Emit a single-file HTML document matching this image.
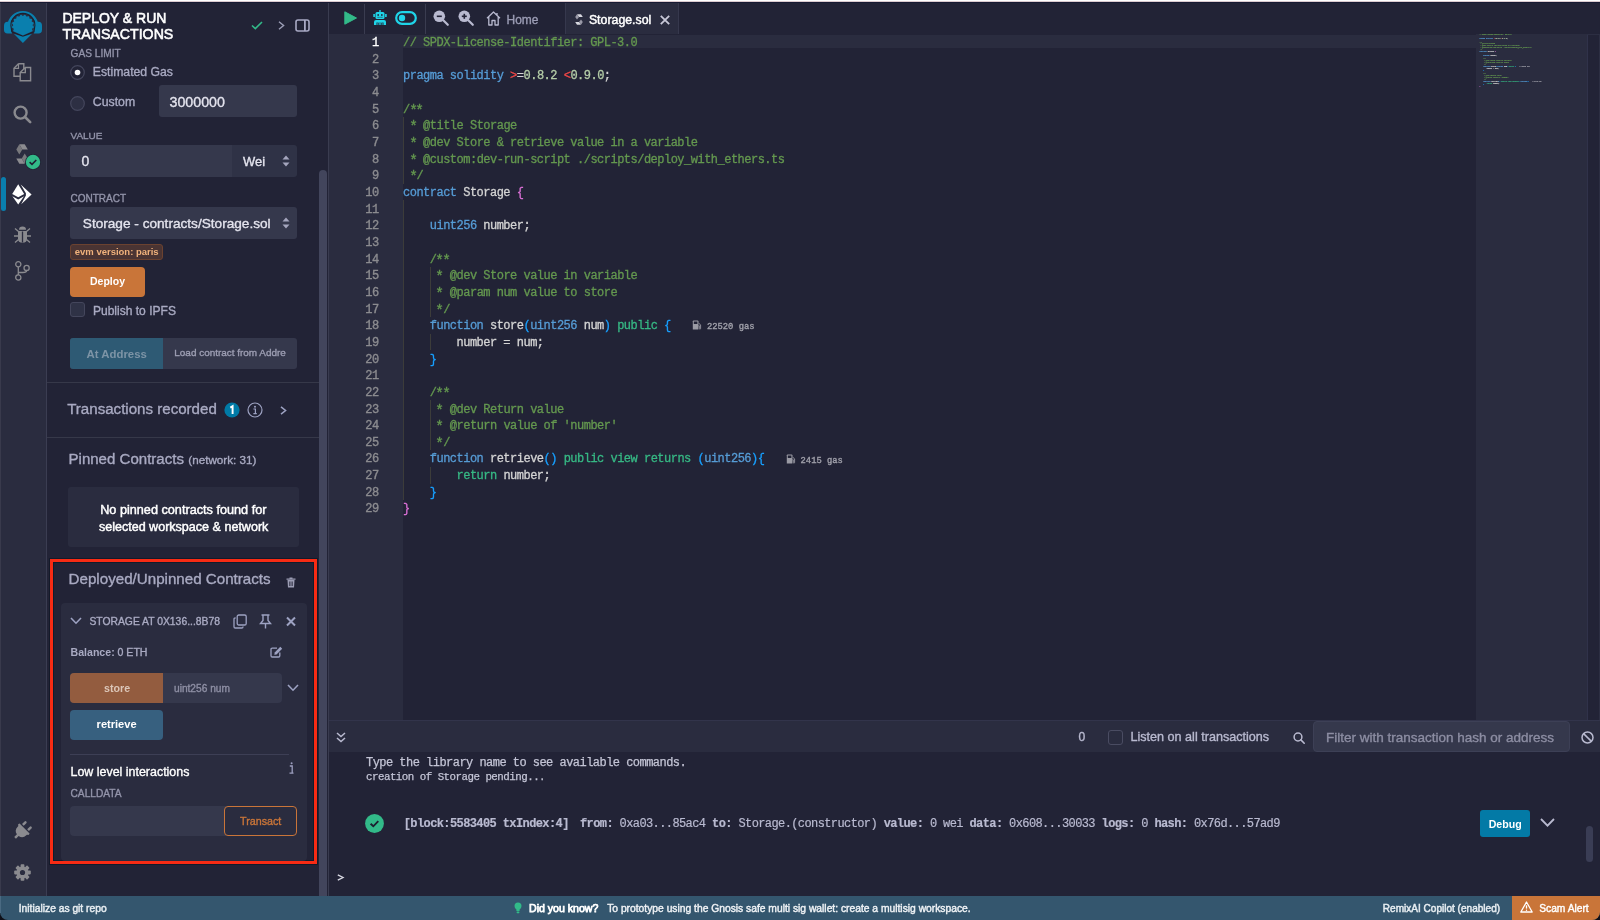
<!DOCTYPE html>
<html><head><meta charset="utf-8">
<style>
*{box-sizing:border-box;margin:0;padding:0}
html,body{width:1600px;height:920px;overflow:hidden;background:#222336}
body{position:relative;font-family:"Liberation Sans",sans-serif;color:#babbcc}
.a{position:absolute}
.t{position:absolute;white-space:nowrap;line-height:1}
#wrap{position:absolute;left:0;top:0;width:1600px;height:920px;will-change:transform}
svg{position:absolute;overflow:visible}
</style></head><body><div id="wrap">

<div class="a" style="left:0px;top:0px;width:1600px;height:1px;background:#ffffff;"></div>
<div class="a" style="left:0px;top:1px;width:1600px;height:1px;background:#dccbcf;"></div>
<div class="a" style="left:0px;top:2px;width:1600px;height:1px;background:#171a33;"></div>
<div class="a" style="left:0px;top:3px;width:46px;height:893px;background:#2a2c3f;"></div>
<div class="a" style="left:0px;top:3px;width:1px;height:893px;background:#393a4c;"></div>
<div class="a" style="left:46px;top:3px;width:1px;height:893px;background:#3b3d52;"></div>
<div class="a" style="left:47px;top:3px;width:281px;height:893px;background:#222336;"></div>
<div class="a" style="left:319px;top:170px;width:8.2px;height:726px;background:#42455c;border-radius:4px 4px 0 0"></div>
<div class="a" style="left:328px;top:3px;width:1px;height:893px;background:#3a3c50;"></div>
<div class="a" style="left:329px;top:3px;width:1271px;height:893px;background:#222336;"></div>
<svg style="left:0px;top:0px" width="46" height="46" viewBox="0 0 46 46">
<path d="M8.8 25.3 A14.15 14.15 0 0 1 37 25.3" fill="none" stroke="#0a7fae" stroke-width="2.7"/>
<path d="M12 21.8 H7.6 Q4 21.8 4 25.6 V29.8 Q4 33.6 7.6 33.6 H12Z" fill="#0a7fae"/>
<path d="M33.8 21.8 H38.4 Q42 21.8 42 25.6 V29.8 Q42 33.6 38.4 33.6 H33.8Z" fill="#0a7fae"/>
<path d="M10.9 25.4 A12 12 0 0 1 34.9 25.4 L34 31.8 L22.9 36.2 L11.8 31.8Z" fill="none" stroke="#1e1e2c" stroke-width="1.1"/>
<path d="M13.29 31.15 L13.20 30.72 L13.33 30.19 L13.56 29.65 L13.74 29.17 L13.73 28.77 L13.49 28.46 L13.05 28.19 L12.54 27.91 L12.11 27.57 L11.91 27.18 L11.99 26.75 L12.31 26.31 L12.72 25.89 L13.07 25.51 L13.21 25.14 L13.10 24.76 L12.79 24.34 L12.42 23.89 L12.15 23.42 L12.11 22.98 L12.35 22.61 L12.80 22.32 L13.34 22.09 L13.81 21.86 L14.08 21.57 L14.12 21.18 L13.99 20.68 L13.81 20.12 L13.73 19.58 L13.86 19.16 L14.22 18.90 L14.75 18.80 L15.33 18.79 L15.85 18.75 L16.21 18.58 L16.39 18.23 L16.45 17.72 L16.50 17.13 L16.62 16.61 L16.90 16.26 L17.33 16.16 L17.86 16.26 L18.41 16.46 L18.90 16.62 L19.29 16.59 L19.60 16.34 L19.85 15.89 L20.10 15.36 L20.42 14.92 L20.80 14.70 L21.24 14.76 L21.69 15.05 L22.13 15.45 L22.53 15.77 L22.90 15.90 L23.27 15.77 L23.67 15.45 L24.11 15.05 L24.56 14.76 L25.00 14.70 L25.38 14.92 L25.70 15.36 L25.95 15.89 L26.20 16.34 L26.51 16.59 L26.90 16.62 L27.39 16.46 L27.94 16.26 L28.47 16.16 L28.90 16.26 L29.18 16.61 L29.30 17.13 L29.35 17.72 L29.41 18.23 L29.59 18.58 L29.95 18.75 L30.47 18.79 L31.05 18.80 L31.58 18.90 L31.94 19.16 L32.07 19.58 L31.99 20.12 L31.81 20.68 L31.68 21.18 L31.72 21.57 L31.99 21.86 L32.46 22.09 L33.00 22.32 L33.45 22.61 L33.69 22.98 L33.65 23.42 L33.38 23.89 L33.01 24.34 L32.70 24.76 L32.59 25.14 L32.73 25.51 L33.08 25.89 L33.49 26.31 L33.81 26.75 L33.89 27.18 L33.69 27.57 L33.26 27.91 L32.75 28.19 L32.31 28.46 L32.07 28.77 L32.06 29.17 L32.24 29.65 L32.47 30.19 L32.60 30.72 L32.51 31.15 L22.9 35.6Z" fill="#0a7fae"/>
<path d="M13.8 33.7 L22.9 36.8 L32.1 33.7 L22.9 43.1Z" fill="#0a7fae"/>
</svg>
<svg style="left:13px;top:63px" width="19" height="19" viewBox="0 0 19 19">
<path d="M5.5 0.8 H10.8 V6 M5.5 0.8 L1 5.3 V13.2 H7" fill="none" stroke="#8a8a8f" stroke-width="1.4"/>
<path d="M5.5 0.8 V5.3 H1" fill="none" stroke="#8a8a8f" stroke-width="1.2"/>
<path d="M12.3 4.5 H17.6 V17.8 H7.2 V9.6 Z M12.3 4.5 V9.6 H7.2" fill="none" stroke="#8a8a8f" stroke-width="1.4"/>
</svg>
<svg style="left:13px;top:104.5px" width="19" height="19" viewBox="0 0 19 19">
<circle cx="7.6" cy="7.6" r="6" fill="none" stroke="#8a8a8f" stroke-width="2.4"/>
<path d="M12 12 L17.2 17.2" stroke="#8a8a8f" stroke-width="2.6" stroke-linecap="round"/>
</svg>
<svg style="left:16px;top:143.5px" width="12" height="20" viewBox="0 0 12 20">
<path d="M3.3 0.3 H8.7 L11.8 5.5 H6.3 Z" fill="#8c8c90"/>
<path d="M3.3 0.3 L0.3 5.5 L3.3 10.5 L6.3 5.5Z" fill="#78787c"/>
<path d="M8.7 19.7 H3.3 L0.3 14.5 H5.7 Z" fill="#8c8c90"/>
<path d="M8.7 19.7 L11.8 14.5 L8.7 9.5 L5.7 14.5Z" fill="#78787c"/>
</svg>
<svg style="left:25.2px;top:154.2px" width="16" height="16" viewBox="0 0 16 16"><circle cx="8" cy="8" r="7.9" fill="#1f2133"/><circle cx="8" cy="8" r="7.2" fill="#32ba89"/><path d="M4.6 8.2 L7 10.3 L11.3 6" fill="none" stroke="#1f2133" stroke-width="1.6"/></svg>
<div class="a" style="left:0.5px;top:177px;width:5px;height:34px;background:#0a7fae;border-radius:2.5px"></div>
<svg style="left:0px;top:180px" width="46" height="30" viewBox="0 0 46 30">
<path d="M18.2 4.2 L24.2 13.9 L18.2 17.2 L12.2 13.9Z" fill="#ffffff"/>
<path d="M12.4 16.3 L18.2 19.6 L24 16.3 L18.2 24.5Z" fill="#ffffff"/>
<path d="M20.7 4.6 L31.6 14.4 L21.2 24.2 L25.9 15.6 L25.9 13.2Z" fill="#ffffff"/>
</svg>
<svg style="left:14px;top:226px" width="17" height="17" viewBox="0 0 17 17">
<path d="M5 3.8 A3.5 3.3 0 0 1 12 3.8Z" fill="#8a8a8f"/>
<path d="M4 5 H13 V12.5 Q13 16.8 8.5 16.8 Q4 16.8 4 12.5Z" fill="#8a8a8f"/>
<path d="M8.5 5.5 V16.5" stroke="#2a2c3f" stroke-width="1.3"/>
<path d="M1 2.5 L4.5 5.5 M16 2.5 L12.5 5.5 M0 10 H4 M17 10 H13 M1 16.5 L4.5 13.5 M16 16.5 L12.5 13.5" stroke="#8a8a8f" stroke-width="1.3"/>
</svg>
<svg style="left:14.5px;top:260.5px" width="15" height="20" viewBox="0 0 15 20">
<circle cx="3.3" cy="3.3" r="2.6" fill="none" stroke="#8a8a8f" stroke-width="1.3"/>
<circle cx="3.3" cy="16.5" r="2.6" fill="none" stroke="#8a8a8f" stroke-width="1.3"/>
<circle cx="11.6" cy="6.9" r="2.6" fill="none" stroke="#8a8a8f" stroke-width="1.3"/>
<path d="M3.3 5.9 V13.9 M3.3 11.5 H8 Q11.6 11.5 11.6 9.5" fill="none" stroke="#8a8a8f" stroke-width="1.3"/>
</svg>
<svg style="left:12px;top:821px" width="20" height="20" viewBox="-262 -262 524 524">
<g transform="rotate(45) translate(-192 -256)" fill="#8a8a8f"><path d="M320,32a32,32,0,0,0-64,0v96h64Zm48,128H16A16,16,0,0,0,0,176v32a16,16,0,0,0,16,16H32v32A160.07,160.07,0,0,0,160,412.8V512h64V412.8A160.07,160.07,0,0,0,352,256V224h16a16,16,0,0,0,16-16V176A16,16,0,0,0,368,160ZM128,32a32,32,0,0,0-64,0v96h64Z"/></g>
</svg>
<svg style="left:13.5px;top:863.5px" width="17" height="17" viewBox="0 0 17 17">
<g fill="#8a8a8f"><circle cx="8.5" cy="8.5" r="6"/>
<rect x="6.6" y="0.2" width="3.8" height="3.5" rx="0.8"/><rect x="6.6" y="13.3" width="3.8" height="3.5" rx="0.8"/>
<rect x="0.2" y="6.6" width="3.5" height="3.8" rx="0.8"/><rect x="13.3" y="6.6" width="3.5" height="3.8" rx="0.8"/>
<rect x="6.6" y="0.2" width="3.8" height="3.5" rx="0.8" transform="rotate(45 8.5 8.5)"/><rect x="6.6" y="13.3" width="3.8" height="3.5" rx="0.8" transform="rotate(45 8.5 8.5)"/>
<rect x="0.2" y="6.6" width="3.5" height="3.8" rx="0.8" transform="rotate(45 8.5 8.5)"/><rect x="13.3" y="6.6" width="3.5" height="3.8" rx="0.8" transform="rotate(45 8.5 8.5)"/>
</g><circle cx="8.5" cy="8.5" r="2.6" fill="#2a2c3f"/>
</svg>
<div class="t" style="left:62.40px;top:11.00px;font-size:14.00px;color:#ffffff;-webkit-text-stroke:0.35px #ffffff;-webkit-text-stroke:0.55px #fff;">DEPLOY &amp; RUN</div>
<div class="t" style="left:62.40px;top:27.00px;font-size:14.17px;color:#ffffff;-webkit-text-stroke:0.35px #ffffff;-webkit-text-stroke:0.55px #fff;">TRANSACTIONS</div>
<svg style="left:251px;top:21px" width="12" height="9" viewBox="0 0 12 9"><path d="M1 4.5 L4.3 7.6 L11 1" fill="none" stroke="#32ba89" stroke-width="1.6"/></svg>
<svg style="left:278px;top:21px" width="7" height="9" viewBox="0 0 7 9"><path d="M1 0.8 L5.6 4.5 L1 8.2" fill="none" stroke="#9d9fb8" stroke-width="1.4"/></svg>
<svg style="left:295px;top:19px" width="15" height="13" viewBox="0 0 15 13"><rect x="1" y="1" width="13" height="11" rx="2" fill="none" stroke="#a8a9c4" stroke-width="1.6"/><rect x="9" y="1" width="1.8" height="11" fill="#a8a9c4"/></svg>
<div class="t" style="left:70.60px;top:49.00px;font-size:10.15px;color:#9394aa;-webkit-text-stroke:0.35px #9394aa;">GAS LIMIT</div>
<svg style="left:70px;top:65px" width="15" height="15" viewBox="0 0 15 15"><circle cx="7.5" cy="7.5" r="6.8" fill="#222336" stroke="#44465c" stroke-width="1.2"/><circle cx="7.5" cy="7.5" r="2.8" fill="#ffffff"/></svg>
<div class="t" style="left:92.80px;top:66.00px;font-size:12.23px;color:#a9aac2;-webkit-text-stroke:0.35px #a9aac2;">Estimated Gas</div>
<svg style="left:70px;top:96px" width="15" height="15" viewBox="0 0 15 15"><circle cx="7.5" cy="7.5" r="6.8" fill="#2d2f43" stroke="#44465c" stroke-width="1.2"/></svg>
<div class="t" style="left:92.80px;top:96.00px;font-size:12.31px;color:#a9aac2;-webkit-text-stroke:0.35px #a9aac2;">Custom</div>
<div class="a" style="left:159px;top:85px;width:138px;height:32px;background:#35384c;border-radius:3px"></div>
<div class="t" style="left:169.50px;top:95.00px;font-size:14.23px;color:#e4e4ee;-webkit-text-stroke:0.35px #e4e4ee;">3000000</div>
<div class="t" style="left:70.50px;top:131.00px;font-size:9.98px;color:#9394aa;-webkit-text-stroke:0.35px #9394aa;">VALUE</div>
<div class="a" style="left:70px;top:145px;width:227px;height:32px;background:#2f3246;border-radius:3px"></div>
<div class="a" style="left:70px;top:145px;width:162px;height:32px;background:#35384c;border-radius:3px 0 0 3px"></div>
<div class="t" style="left:81.60px;top:154.00px;font-size:14.00px;color:#e4e4ee;-webkit-text-stroke:0.35px #e4e4ee;">0</div>
<div class="t" style="left:243.00px;top:156.00px;font-size:12.91px;color:#e4e4ee;-webkit-text-stroke:0.35px #e4e4ee;">Wei</div>
<svg style="left:282px;top:155px" width="8" height="12" viewBox="0 0 8 12"><path d="M4 0.5 L7.5 4.5 L0.5 4.5Z M4 11.5 L7.5 7.5 L0.5 7.5Z" fill="#a4a5bd"/></svg>
<div class="t" style="left:70.50px;top:194.00px;font-size:10.01px;color:#9394aa;-webkit-text-stroke:0.35px #9394aa;">CONTRACT</div>
<div class="a" style="left:70px;top:207px;width:227px;height:32px;background:#35384c;border-radius:3px"></div>
<div class="t" style="left:82.80px;top:217.00px;font-size:13.64px;color:#e4e4ee;-webkit-text-stroke:0.35px #e4e4ee;">Storage - contracts/Storage.sol</div>
<svg style="left:282px;top:217px" width="8" height="12" viewBox="0 0 8 12"><path d="M4 0.5 L7.5 4.5 L0.5 4.5Z M4 11.5 L7.5 7.5 L0.5 7.5Z" fill="#a4a5bd"/></svg>
<div class="a" style="left:70px;top:244px;width:93px;height:16px;background:#4a3433;border:1px solid #6b4230;border-radius:3px"></div>
<div class="t" style="left:74.80px;top:247.00px;font-size:9.49px;color:#f0b27c;font-weight:bold;">evm version: paris</div>
<div class="a" style="left:70px;top:267px;width:75px;height:30px;background:#c97539;border-radius:4px"></div>
<div class="t" style="left:90.00px;top:276.00px;font-size:10.50px;color:#ffffff;font-weight:bold;">Deploy</div>
<div class="a" style="left:70px;top:302px;width:15px;height:15px;background:#2f3246;border:1px solid #44465c;border-radius:3px"></div>
<div class="t" style="left:92.90px;top:305.00px;font-size:12.06px;color:#a9aac2;-webkit-text-stroke:0.35px #a9aac2;">Publish to IPFS</div>
<div class="a" style="left:70px;top:338px;width:227px;height:31px;background:#35384c;border-radius:3px"></div>
<div class="a" style="left:70px;top:338px;width:93px;height:31px;background:#2e5a74;border-radius:3px 0 0 3px"></div>
<div class="t" style="left:86.60px;top:349.00px;font-size:11.38px;color:#7d94a6;font-weight:bold;">At Address</div>
<div class="t" style="left:174.30px;top:348.00px;font-size:9.95px;color:#9d9eb3;-webkit-text-stroke:0.35px #9d9eb3;">Load contract from Addre</div>
<div class="a" style="left:47px;top:382px;width:272px;height:1px;background:#363849;"></div>
<div class="t" style="left:67.20px;top:401.00px;font-size:15.10px;color:#a9aac2;-webkit-text-stroke:0.35px #a9aac2;">Transactions recorded</div>
<svg style="left:224px;top:402px" width="16" height="16" viewBox="0 0 16 16"><circle cx="8" cy="8" r="7.6" fill="#007aa6"/><path d="M6.3 5.6 L8.6 4.2 L8.6 12" fill="none" stroke="#fff" stroke-width="1.9"/></svg>
<svg style="left:246.5px;top:402px" width="16" height="16" viewBox="0 0 16 16"><circle cx="8" cy="8" r="7" fill="none" stroke="#9da2c2" stroke-width="1.2"/><circle cx="8" cy="4.8" r="1" fill="#9da2c2"/><path d="M6.4 7 H8.4 V11.6 M6.4 11.6 H9.8" fill="none" stroke="#9da2c2" stroke-width="1.2"/></svg>
<svg style="left:279.5px;top:406px" width="7" height="9" viewBox="0 0 7 9"><path d="M1 0.8 L5.6 4.5 L1 8.2" fill="none" stroke="#9da2c2" stroke-width="1.5"/></svg>
<div class="a" style="left:47px;top:437px;width:272px;height:1px;background:#363849;"></div>
<div class="t" style="left:68.50px;top:451.00px;font-size:15.06px;color:#a9aac2;-webkit-text-stroke:0.35px #a9aac2;">Pinned Contracts</div>
<div class="t" style="left:188.30px;top:454.00px;font-size:11.67px;color:#a9aac2;-webkit-text-stroke:0.35px #a9aac2;">(network: 31)</div>
<div class="a" style="left:68px;top:487px;width:231px;height:60px;background:#2a2c3f;border-radius:3px"></div>
<div class="t" style="left:100.20px;top:504.00px;font-size:12.68px;color:#ffffff;-webkit-text-stroke:0.35px #ffffff;-webkit-text-stroke:0.45px #fff;">No pinned contracts found for</div>
<div class="t" style="left:98.90px;top:521.00px;font-size:12.56px;color:#ffffff;-webkit-text-stroke:0.35px #ffffff;-webkit-text-stroke:0.45px #fff;">selected workspace &amp; network</div>
<div class="a" style="left:50px;top:559px;width:267px;height:305px;background:transparent;border:3px solid #f72b14;box-shadow:0 0 0 1px rgba(10,20,35,0.6),inset 0 0 0 1px rgba(10,25,40,0.7)"></div>
<div class="t" style="left:68.60px;top:571.00px;font-size:15.15px;color:#a9aac2;-webkit-text-stroke:0.35px #a9aac2;">Deployed/Unpinned Contracts</div>
<svg style="left:285.5px;top:577px" width="10" height="11" viewBox="0 0 10 11"><path d="M3.5 1 H6.5 M0.5 2.2 H9.5" stroke="#9c9db4" stroke-width="1.2" fill="none"/><path d="M1.5 3 H8.5 L8 10.5 H2Z" fill="#9c9db4"/><path d="M3.6 4.5 V9 M5 4.5 V9 M6.4 4.5 V9" stroke="#222336" stroke-width="0.7"/></svg>
<div class="a" style="left:61px;top:603px;width:246px;height:258px;background:#2a2c3f;border-radius:4px"></div>
<svg style="left:69.5px;top:617px" width="12" height="8" viewBox="0 0 12 8"><path d="M1 1 L6 6.2 L11 1" fill="none" stroke="#9da2c2" stroke-width="1.6"/></svg>
<div class="t" style="left:89.40px;top:617.00px;font-size:10.35px;color:#a9aac2;-webkit-text-stroke:0.35px #a9aac2;">STORAGE AT 0X136...8B78</div>
<svg style="left:232.5px;top:613.5px" width="14" height="15" viewBox="0 0 14 15"><rect x="4.2" y="1" width="9" height="10" rx="1.6" fill="none" stroke="#9da2c2" stroke-width="1.3"/><path d="M2.6 4 H2.2 Q1 4 1 5.2 V12.8 Q1 14 2.2 14 H8.8 Q10 14 10 12.8 V12.5" fill="none" stroke="#9da2c2" stroke-width="1.3"/></svg>
<svg style="left:259px;top:614px" width="13" height="15" viewBox="0 0 13 15"><path d="M2.5 1 H10.5 M4 1.2 V6.5 L1.5 9.5 H11.5 L9 6.5 V1.2 M6.5 9.5 V14.5" fill="none" stroke="#9da2c2" stroke-width="1.4"/></svg>
<svg style="left:285.5px;top:617px" width="10" height="9" viewBox="0 0 10 9"><path d="M1 0.5 L9 8.5 M9 0.5 L1 8.5" fill="none" stroke="#9da2c2" stroke-width="2"/></svg>
<div class="t" style="left:70.50px;top:647.00px;font-size:10.60px;color:#a9aac2;font-weight:bold;">Balance:</div>
<div class="t" style="left:117.50px;top:647.00px;font-size:10.59px;color:#a9aac2;-webkit-text-stroke:0.35px #a9aac2;">0 ETH</div>
<svg style="left:270px;top:646px" width="13" height="12" viewBox="0 0 13 12"><path d="M7 2.2 H2.2 Q1 2.2 1 3.4 V9.8 Q1 11 2.2 11 H8.6 Q9.8 11 9.8 9.8 V6.5" fill="none" stroke="#9da2c2" stroke-width="1.3"/><path d="M10.3 0.8 L12.2 2.7 L6.5 8.4 L4.3 8.8 L4.7 6.5Z" fill="#9da2c2"/></svg>
<div class="a" style="left:70px;top:673px;width:212px;height:30px;background:#35384c;border-radius:4px"></div>
<div class="a" style="left:70px;top:673px;width:93px;height:30px;background:#935c3f;border-radius:4px 0 0 4px"></div>
<div class="t" style="left:104.00px;top:683.00px;font-size:10.67px;color:#dcc6b8;font-weight:bold;">store</div>
<div class="t" style="left:174.00px;top:684.00px;font-size:10.17px;color:#8e8fa4;-webkit-text-stroke:0.35px #8e8fa4;">uint256 num</div>
<svg style="left:286.5px;top:683.5px" width="12" height="8" viewBox="0 0 12 8"><path d="M1 1 L6 6.2 L11 1" fill="none" stroke="#9da2c2" stroke-width="1.6"/></svg>
<div class="a" style="left:70px;top:710px;width:93px;height:30px;background:#37607f;border-radius:4px"></div>
<div class="t" style="left:96.60px;top:719.00px;font-size:11.07px;color:#ffffff;font-weight:bold;">retrieve</div>
<div class="a" style="left:70px;top:754px;width:219px;height:1px;background:#3d3f55;"></div>
<div class="t" style="left:70.50px;top:766.00px;font-size:12.44px;color:#ffffff;-webkit-text-stroke:0.35px #ffffff;">Low level interactions</div>
<svg style="left:289px;top:762px" width="5" height="12" viewBox="0 0 5 12"><circle cx="2.6" cy="1.2" r="1" fill="#9d9fc0"/><path d="M0.8 4 H3.2 V11.2 M0.5 11.2 H4.5" fill="none" stroke="#9d9fc0" stroke-width="1.3"/></svg>
<div class="t" style="left:70.50px;top:789.00px;font-size:10.18px;color:#9394aa;-webkit-text-stroke:0.35px #9394aa;">CALLDATA</div>
<div class="a" style="left:70px;top:806px;width:160px;height:30px;background:#35384c;border-radius:4px 0 0 4px"></div>
<div class="a" style="left:223.5px;top:806px;width:73.5px;height:30px;background:#2a2c3f;border:1px solid #c97539;border-radius:4px"></div>
<div class="t" style="left:240.00px;top:816.00px;font-size:10.72px;color:#c97539;-webkit-text-stroke:0.35px #c97539;">Transact</div>
<div class="a" style="left:364px;top:4px;width:1px;height:30px;background:#3a3c50;"></div>
<div class="a" style="left:424.5px;top:4px;width:1px;height:30px;background:#3a3c50;"></div>
<svg style="left:343.5px;top:11px" width="13" height="14" viewBox="0 0 13 14"><path d="M0.8 0.8 L12.5 7 L0.8 13.2Z" fill="#32ba89" stroke="#32ba89" stroke-width="1" stroke-linejoin="round"/></svg>
<svg style="left:372.5px;top:10px" width="14" height="15" viewBox="0 0 14 15">
<rect x="6.3" y="0" width="1.4" height="2.2" fill="#1fd4e8"/>
<rect x="2.5" y="2" width="9" height="7" rx="1.5" fill="#1fd4e8"/>
<rect x="0.3" y="4" width="1.6" height="3" fill="#1fd4e8"/><rect x="12.1" y="4" width="1.6" height="3" fill="#1fd4e8"/>
<rect x="4.4" y="4.2" width="1.6" height="1.6" fill="#222336"/><rect x="8" y="4.2" width="1.6" height="1.6" fill="#222336"/>
<rect x="4.6" y="6.8" width="1" height="0.9" fill="#222336"/><rect x="6.5" y="6.8" width="1" height="0.9" fill="#222336"/><rect x="8.4" y="6.8" width="1" height="0.9" fill="#222336"/>
<path d="M1 15 V12 Q1 10 3 10 H11 Q13 10 13 12 V15 H10.5 V12.5 H3.5 V15Z" fill="#1fd4e8"/>
<rect x="4.5" y="12.5" width="5" height="2.5" fill="#1fd4e8"/>
<rect x="5.3" y="13" width="0.7" height="2" fill="#222336"/><rect x="6.65" y="13" width="0.7" height="2" fill="#222336"/><rect x="8" y="13" width="0.7" height="2" fill="#222336"/>
</svg>
<svg style="left:395px;top:11px" width="22" height="14" viewBox="0 0 22 14">
<rect x="1.2" y="1.2" width="19.6" height="11.6" rx="5.8" fill="none" stroke="#1fd4e8" stroke-width="2.2"/>
<circle cx="7" cy="7" r="3.2" fill="#1fd4e8"/>
</svg>
<svg style="left:433px;top:9.5px" width="16" height="16" viewBox="0 0 16 16">
<circle cx="6.3" cy="6.3" r="5.8" fill="#b9bad0"/>
<path d="M3.8 6.3 H8.8" stroke="#222336" stroke-width="1.6"/>
<path d="M10.3 10.3 L14.8 14.8" stroke="#b9bad0" stroke-width="2.2" stroke-linecap="round"/>
</svg>
<svg style="left:457.5px;top:9.5px" width="16" height="16" viewBox="0 0 16 16">
<circle cx="6.3" cy="6.3" r="5.8" fill="#b9bad0"/>
<path d="M3.8 6.3 H8.8" stroke="#222336" stroke-width="1.6"/><path d="M6.3 3.8 V8.8" stroke="#222336" stroke-width="1.6"/>
<path d="M10.3 10.3 L14.8 14.8" stroke="#b9bad0" stroke-width="2.2" stroke-linecap="round"/>
</svg>
<svg style="left:485.5px;top:10.5px" width="15" height="15" viewBox="0 0 15 15">
<path d="M1 7.2 L7.5 1 L14 7.2 M2.8 5.8 V14 H6 V9.5 H9 V14 H12.2 V5.8 M11 2 V4.2" fill="none" stroke="#b9bad0" stroke-width="1.3" stroke-linejoin="round"/>
</svg>
<div class="t" style="left:506.60px;top:15.00px;font-size:11.96px;color:#9c9db5;-webkit-text-stroke:0.35px #9c9db5;">Home</div>
<div class="a" style="left:565px;top:3px;width:114px;height:31px;background:#2a2c3f;border-left:1px solid #36384d;border-right:1px solid #36384d"></div>
<svg style="left:575px;top:14px" width="8" height="11" viewBox="0 0 8 11">
<path d="M2 0.3 H6 L7.8 3 H4Z" fill="#d8d8e0"/><path d="M2 0.3 L0.2 3 L2 5.6 L4 3Z" fill="#9a9aa8"/>
<path d="M6 10.7 H2 L0.2 8 H4Z" fill="#d8d8e0"/><path d="M6 10.7 L7.8 8 L6 5.4 L4 8Z" fill="#9a9aa8"/>
</svg>
<div class="t" style="left:588.90px;top:14.00px;font-size:12.35px;color:#ffffff;-webkit-text-stroke:0.35px #ffffff;-webkit-text-stroke:0.45px #fff;">Storage.sol</div>
<svg style="left:660px;top:14.5px" width="10" height="10" viewBox="0 0 10 10"><path d="M0.8 0.8 L9.2 9.2 M9.2 0.8 L0.8 9.2" stroke="#c8c8d8" stroke-width="1.8"/></svg>
<div class="a" style="left:329px;top:34px;width:74px;height:686px;background:#2a2c3f;"></div>
<div class="a" style="left:1476px;top:34px;width:112px;height:686px;background:#2a2c3f;"></div>
<div class="a" style="left:1588px;top:34px;width:12px;height:686px;background:#222336;"></div>
<div class="a" style="left:1587px;top:34px;width:1px;height:686px;background:#30324a;"></div>
<div class="a" style="left:1587px;top:34px;width:13px;height:1px;background:#2c2e42;"></div>
<div class="a" style="left:1599px;top:34px;width:1px;height:686px;background:#2c2e42;"></div>
<div class="a" style="left:403px;top:35px;width:1073px;height:13px;background:#2a2c3f;"></div>
<div class="a" style="left:403px;top:117.0px;width:1px;height:16.66px;background:#3c3c3a;"></div>
<div class="a" style="left:403px;top:133.66px;width:1px;height:16.66px;background:#3c3c3a;"></div>
<div class="a" style="left:403px;top:150.32px;width:1px;height:16.66px;background:#3c3c3a;"></div>
<div class="a" style="left:403px;top:166.98px;width:1px;height:16.66px;background:#3c3c3a;"></div>
<div class="a" style="left:403px;top:200.3px;width:1px;height:16.66px;background:#3c3c3a;"></div>
<div class="a" style="left:403px;top:216.96px;width:1px;height:16.66px;background:#3c3c3a;"></div>
<div class="a" style="left:403px;top:233.62px;width:1px;height:16.66px;background:#3c3c3a;"></div>
<div class="a" style="left:403px;top:250.28px;width:1px;height:16.66px;background:#3c3c3a;"></div>
<div class="a" style="left:403px;top:266.94px;width:1px;height:16.66px;background:#3c3c3a;"></div>
<div class="a" style="left:403px;top:283.6px;width:1px;height:16.66px;background:#3c3c3a;"></div>
<div class="a" style="left:403px;top:300.26px;width:1px;height:16.66px;background:#3c3c3a;"></div>
<div class="a" style="left:403px;top:316.92px;width:1px;height:16.66px;background:#3c3c3a;"></div>
<div class="a" style="left:403px;top:333.58px;width:1px;height:16.66px;background:#3c3c3a;"></div>
<div class="a" style="left:403px;top:350.24px;width:1px;height:16.66px;background:#3c3c3a;"></div>
<div class="a" style="left:403px;top:366.9px;width:1px;height:16.66px;background:#3c3c3a;"></div>
<div class="a" style="left:403px;top:383.56px;width:1px;height:16.66px;background:#3c3c3a;"></div>
<div class="a" style="left:403px;top:400.22px;width:1px;height:16.66px;background:#3c3c3a;"></div>
<div class="a" style="left:403px;top:416.88px;width:1px;height:16.66px;background:#3c3c3a;"></div>
<div class="a" style="left:403px;top:433.54px;width:1px;height:16.66px;background:#3c3c3a;"></div>
<div class="a" style="left:403px;top:450.2px;width:1px;height:16.66px;background:#3c3c3a;"></div>
<div class="a" style="left:403px;top:466.86px;width:1px;height:16.66px;background:#3c3c3a;"></div>
<div class="a" style="left:403px;top:483.52px;width:1px;height:16.66px;background:#3c3c3a;"></div>
<div class="a" style="left:429.7px;top:266.94px;width:1px;height:16.66px;background:#3c3c3a;"></div>
<div class="a" style="left:429.7px;top:283.6px;width:1px;height:16.66px;background:#3c3c3a;"></div>
<div class="a" style="left:429.7px;top:300.26px;width:1px;height:16.66px;background:#3c3c3a;"></div>
<div class="a" style="left:429.7px;top:333.58px;width:1px;height:16.66px;background:#3c3c3a;"></div>
<div class="a" style="left:429.7px;top:400.22px;width:1px;height:16.66px;background:#3c3c3a;"></div>
<div class="a" style="left:429.7px;top:416.88px;width:1px;height:16.66px;background:#3c3c3a;"></div>
<div class="a" style="left:429.7px;top:433.54px;width:1px;height:16.66px;background:#3c3c3a;"></div>
<div class="a" style="left:429.7px;top:466.86px;width:1px;height:16.66px;background:#3c3c3a;"></div>
<div class="t" style="left:372.03px;top:37.00px;font-size:12.00px;color:#ffffff;font-family:'Liberation Mono',monospace;-webkit-text-stroke:0.35px #ffffff;letter-spacing:-0.51px;">1</div>
<div class="t" style="left:403px;top:37.00px;font-size:12.0px;font-family:&quot;Liberation Mono&quot;,monospace;letter-spacing:-0.510px;white-space:pre;-webkit-text-stroke-width:0.3px"><span style="color:#64984f">// SPDX-License-Identifier: GPL-3.0</span></div>
<div class="t" style="left:372.03px;top:54.00px;font-size:12.00px;color:#8c8c90;font-family:'Liberation Mono',monospace;-webkit-text-stroke:0.35px #8c8c90;letter-spacing:-0.51px;">2</div>
<div class="t" style="left:372.03px;top:70.00px;font-size:12.00px;color:#8c8c90;font-family:'Liberation Mono',monospace;-webkit-text-stroke:0.35px #8c8c90;letter-spacing:-0.51px;">3</div>
<div class="t" style="left:403px;top:70.00px;font-size:12.0px;font-family:&quot;Liberation Mono&quot;,monospace;letter-spacing:-0.510px;white-space:pre;-webkit-text-stroke-width:0.3px"><span style="color:#569cd6">pragma</span><span style="color:#d4d4d4"> </span><span style="color:#569cd6">solidity</span><span style="color:#d4d4d4"> </span><span style="color:#f44747">&gt;</span><span style="color:#d4d4d4">=</span><span style="color:#b5cea8">0.8.2</span><span style="color:#d4d4d4"> </span><span style="color:#f44747">&lt;</span><span style="color:#b5cea8">0.9.0</span><span style="color:#d4d4d4">;</span></div>
<div class="t" style="left:372.03px;top:87.00px;font-size:12.00px;color:#8c8c90;font-family:'Liberation Mono',monospace;-webkit-text-stroke:0.35px #8c8c90;letter-spacing:-0.51px;">4</div>
<div class="t" style="left:372.03px;top:104.00px;font-size:12.00px;color:#8c8c90;font-family:'Liberation Mono',monospace;-webkit-text-stroke:0.35px #8c8c90;letter-spacing:-0.51px;">5</div>
<div class="t" style="left:403px;top:104.00px;font-size:12.0px;font-family:&quot;Liberation Mono&quot;,monospace;letter-spacing:-0.510px;white-space:pre;-webkit-text-stroke-width:0.3px"><span style="color:#64984f">/<span style="display:inline-block;transform:translateY(1.6px) scale(1.2)">*</span><span style="display:inline-block;transform:translateY(1.6px) scale(1.2)">*</span></span></div>
<div class="t" style="left:372.03px;top:120.00px;font-size:12.00px;color:#8c8c90;font-family:'Liberation Mono',monospace;-webkit-text-stroke:0.35px #8c8c90;letter-spacing:-0.51px;">6</div>
<div class="t" style="left:403px;top:120.00px;font-size:12.0px;font-family:&quot;Liberation Mono&quot;,monospace;letter-spacing:-0.510px;white-space:pre;-webkit-text-stroke-width:0.3px"><span style="color:#64984f"> <span style="display:inline-block;transform:translateY(1.6px) scale(1.2)">*</span> @title Storage</span></div>
<div class="t" style="left:372.03px;top:137.00px;font-size:12.00px;color:#8c8c90;font-family:'Liberation Mono',monospace;-webkit-text-stroke:0.35px #8c8c90;letter-spacing:-0.51px;">7</div>
<div class="t" style="left:403px;top:137.00px;font-size:12.0px;font-family:&quot;Liberation Mono&quot;,monospace;letter-spacing:-0.510px;white-space:pre;-webkit-text-stroke-width:0.3px"><span style="color:#64984f"> <span style="display:inline-block;transform:translateY(1.6px) scale(1.2)">*</span> @dev Store &amp; retrieve value in a variable</span></div>
<div class="t" style="left:372.03px;top:154.00px;font-size:12.00px;color:#8c8c90;font-family:'Liberation Mono',monospace;-webkit-text-stroke:0.35px #8c8c90;letter-spacing:-0.51px;">8</div>
<div class="t" style="left:403px;top:154.00px;font-size:12.0px;font-family:&quot;Liberation Mono&quot;,monospace;letter-spacing:-0.510px;white-space:pre;-webkit-text-stroke-width:0.3px"><span style="color:#64984f"> <span style="display:inline-block;transform:translateY(1.6px) scale(1.2)">*</span> @custom:dev-run-script ./scripts/deploy_with_ethers.ts</span></div>
<div class="t" style="left:372.03px;top:170.00px;font-size:12.00px;color:#8c8c90;font-family:'Liberation Mono',monospace;-webkit-text-stroke:0.35px #8c8c90;letter-spacing:-0.51px;">9</div>
<div class="t" style="left:403px;top:170.00px;font-size:12.0px;font-family:&quot;Liberation Mono&quot;,monospace;letter-spacing:-0.510px;white-space:pre;-webkit-text-stroke-width:0.3px"><span style="color:#64984f"> <span style="display:inline-block;transform:translateY(1.6px) scale(1.2)">*</span>/</span></div>
<div class="t" style="left:365.36px;top:187.00px;font-size:12.00px;color:#8c8c90;font-family:'Liberation Mono',monospace;-webkit-text-stroke:0.35px #8c8c90;letter-spacing:-0.51px;">10</div>
<div class="t" style="left:403px;top:187.00px;font-size:12.0px;font-family:&quot;Liberation Mono&quot;,monospace;letter-spacing:-0.510px;white-space:pre;-webkit-text-stroke-width:0.3px"><span style="color:#569cd6">contract</span><span style="color:#d4d4d4"> Storage </span><span style="color:#da70d6">{</span></div>
<div class="t" style="left:365.36px;top:204.00px;font-size:12.00px;color:#8c8c90;font-family:'Liberation Mono',monospace;-webkit-text-stroke:0.35px #8c8c90;letter-spacing:-0.51px;">11</div>
<div class="t" style="left:365.36px;top:220.00px;font-size:12.00px;color:#8c8c90;font-family:'Liberation Mono',monospace;-webkit-text-stroke:0.35px #8c8c90;letter-spacing:-0.51px;">12</div>
<div class="t" style="left:403px;top:220.00px;font-size:12.0px;font-family:&quot;Liberation Mono&quot;,monospace;letter-spacing:-0.510px;white-space:pre;-webkit-text-stroke-width:0.3px"><span style="color:#d4d4d4">    </span><span style="color:#569cd6">uint256</span><span style="color:#d4d4d4"> number;</span></div>
<div class="t" style="left:365.36px;top:237.00px;font-size:12.00px;color:#8c8c90;font-family:'Liberation Mono',monospace;-webkit-text-stroke:0.35px #8c8c90;letter-spacing:-0.51px;">13</div>
<div class="t" style="left:365.36px;top:254.00px;font-size:12.00px;color:#8c8c90;font-family:'Liberation Mono',monospace;-webkit-text-stroke:0.35px #8c8c90;letter-spacing:-0.51px;">14</div>
<div class="t" style="left:403px;top:254.00px;font-size:12.0px;font-family:&quot;Liberation Mono&quot;,monospace;letter-spacing:-0.510px;white-space:pre;-webkit-text-stroke-width:0.3px"><span style="color:#64984f">    /<span style="display:inline-block;transform:translateY(1.6px) scale(1.2)">*</span><span style="display:inline-block;transform:translateY(1.6px) scale(1.2)">*</span></span></div>
<div class="t" style="left:365.36px;top:270.00px;font-size:12.00px;color:#8c8c90;font-family:'Liberation Mono',monospace;-webkit-text-stroke:0.35px #8c8c90;letter-spacing:-0.51px;">15</div>
<div class="t" style="left:403px;top:270.00px;font-size:12.0px;font-family:&quot;Liberation Mono&quot;,monospace;letter-spacing:-0.510px;white-space:pre;-webkit-text-stroke-width:0.3px"><span style="color:#64984f">     <span style="display:inline-block;transform:translateY(1.6px) scale(1.2)">*</span> @dev Store value in variable</span></div>
<div class="t" style="left:365.36px;top:287.00px;font-size:12.00px;color:#8c8c90;font-family:'Liberation Mono',monospace;-webkit-text-stroke:0.35px #8c8c90;letter-spacing:-0.51px;">16</div>
<div class="t" style="left:403px;top:287.00px;font-size:12.0px;font-family:&quot;Liberation Mono&quot;,monospace;letter-spacing:-0.510px;white-space:pre;-webkit-text-stroke-width:0.3px"><span style="color:#64984f">     <span style="display:inline-block;transform:translateY(1.6px) scale(1.2)">*</span> @param num value to store</span></div>
<div class="t" style="left:365.36px;top:304.00px;font-size:12.00px;color:#8c8c90;font-family:'Liberation Mono',monospace;-webkit-text-stroke:0.35px #8c8c90;letter-spacing:-0.51px;">17</div>
<div class="t" style="left:403px;top:304.00px;font-size:12.0px;font-family:&quot;Liberation Mono&quot;,monospace;letter-spacing:-0.510px;white-space:pre;-webkit-text-stroke-width:0.3px"><span style="color:#64984f">     <span style="display:inline-block;transform:translateY(1.6px) scale(1.2)">*</span>/</span></div>
<div class="t" style="left:365.36px;top:320.00px;font-size:12.00px;color:#8c8c90;font-family:'Liberation Mono',monospace;-webkit-text-stroke:0.35px #8c8c90;letter-spacing:-0.51px;">18</div>
<div class="t" style="left:403px;top:320.00px;font-size:12.0px;font-family:&quot;Liberation Mono&quot;,monospace;letter-spacing:-0.510px;white-space:pre;-webkit-text-stroke-width:0.3px"><span style="color:#d4d4d4">    </span><span style="color:#569cd6">function</span><span style="color:#d4d4d4"> store</span><span style="color:#179fff">(</span><span style="color:#569cd6">uint256</span><span style="color:#d4d4d4"> num</span><span style="color:#179fff">)</span><span style="color:#d4d4d4"> </span><span style="color:#36b884">public</span><span style="color:#d4d4d4"> </span><span style="color:#179fff">{</span></div>
<div class="t" style="left:365.36px;top:337.00px;font-size:12.00px;color:#8c8c90;font-family:'Liberation Mono',monospace;-webkit-text-stroke:0.35px #8c8c90;letter-spacing:-0.51px;">19</div>
<div class="t" style="left:403px;top:337.00px;font-size:12.0px;font-family:&quot;Liberation Mono&quot;,monospace;letter-spacing:-0.510px;white-space:pre;-webkit-text-stroke-width:0.3px"><span style="color:#d4d4d4">        number = num;</span></div>
<div class="t" style="left:365.36px;top:354.00px;font-size:12.00px;color:#8c8c90;font-family:'Liberation Mono',monospace;-webkit-text-stroke:0.35px #8c8c90;letter-spacing:-0.51px;">20</div>
<div class="t" style="left:403px;top:354.00px;font-size:12.0px;font-family:&quot;Liberation Mono&quot;,monospace;letter-spacing:-0.510px;white-space:pre;-webkit-text-stroke-width:0.3px"><span style="color:#d4d4d4">    </span><span style="color:#179fff">}</span></div>
<div class="t" style="left:365.36px;top:370.00px;font-size:12.00px;color:#8c8c90;font-family:'Liberation Mono',monospace;-webkit-text-stroke:0.35px #8c8c90;letter-spacing:-0.51px;">21</div>
<div class="t" style="left:365.36px;top:387.00px;font-size:12.00px;color:#8c8c90;font-family:'Liberation Mono',monospace;-webkit-text-stroke:0.35px #8c8c90;letter-spacing:-0.51px;">22</div>
<div class="t" style="left:403px;top:387.00px;font-size:12.0px;font-family:&quot;Liberation Mono&quot;,monospace;letter-spacing:-0.510px;white-space:pre;-webkit-text-stroke-width:0.3px"><span style="color:#64984f">    /<span style="display:inline-block;transform:translateY(1.6px) scale(1.2)">*</span><span style="display:inline-block;transform:translateY(1.6px) scale(1.2)">*</span></span></div>
<div class="t" style="left:365.36px;top:404.00px;font-size:12.00px;color:#8c8c90;font-family:'Liberation Mono',monospace;-webkit-text-stroke:0.35px #8c8c90;letter-spacing:-0.51px;">23</div>
<div class="t" style="left:403px;top:404.00px;font-size:12.0px;font-family:&quot;Liberation Mono&quot;,monospace;letter-spacing:-0.510px;white-space:pre;-webkit-text-stroke-width:0.3px"><span style="color:#64984f">     <span style="display:inline-block;transform:translateY(1.6px) scale(1.2)">*</span> @dev Return value</span></div>
<div class="t" style="left:365.36px;top:420.00px;font-size:12.00px;color:#8c8c90;font-family:'Liberation Mono',monospace;-webkit-text-stroke:0.35px #8c8c90;letter-spacing:-0.51px;">24</div>
<div class="t" style="left:403px;top:420.00px;font-size:12.0px;font-family:&quot;Liberation Mono&quot;,monospace;letter-spacing:-0.510px;white-space:pre;-webkit-text-stroke-width:0.3px"><span style="color:#64984f">     <span style="display:inline-block;transform:translateY(1.6px) scale(1.2)">*</span> @return value of &#x27;number&#x27;</span></div>
<div class="t" style="left:365.36px;top:437.00px;font-size:12.00px;color:#8c8c90;font-family:'Liberation Mono',monospace;-webkit-text-stroke:0.35px #8c8c90;letter-spacing:-0.51px;">25</div>
<div class="t" style="left:403px;top:437.00px;font-size:12.0px;font-family:&quot;Liberation Mono&quot;,monospace;letter-spacing:-0.510px;white-space:pre;-webkit-text-stroke-width:0.3px"><span style="color:#64984f">     <span style="display:inline-block;transform:translateY(1.6px) scale(1.2)">*</span>/</span></div>
<div class="t" style="left:365.36px;top:453.00px;font-size:12.00px;color:#8c8c90;font-family:'Liberation Mono',monospace;-webkit-text-stroke:0.35px #8c8c90;letter-spacing:-0.51px;">26</div>
<div class="t" style="left:403px;top:453.00px;font-size:12.0px;font-family:&quot;Liberation Mono&quot;,monospace;letter-spacing:-0.510px;white-space:pre;-webkit-text-stroke-width:0.3px"><span style="color:#d4d4d4">    </span><span style="color:#569cd6">function</span><span style="color:#d4d4d4"> retrieve</span><span style="color:#179fff">()</span><span style="color:#d4d4d4"> </span><span style="color:#36b884">public</span><span style="color:#d4d4d4"> </span><span style="color:#36b884">view</span><span style="color:#d4d4d4"> </span><span style="color:#36b884">returns</span><span style="color:#d4d4d4"> </span><span style="color:#179fff">(</span><span style="color:#569cd6">uint256</span><span style="color:#179fff">)</span><span style="color:#179fff">{</span></div>
<div class="t" style="left:365.36px;top:470.00px;font-size:12.00px;color:#8c8c90;font-family:'Liberation Mono',monospace;-webkit-text-stroke:0.35px #8c8c90;letter-spacing:-0.51px;">27</div>
<div class="t" style="left:403px;top:470.00px;font-size:12.0px;font-family:&quot;Liberation Mono&quot;,monospace;letter-spacing:-0.510px;white-space:pre;-webkit-text-stroke-width:0.3px"><span style="color:#d4d4d4">        </span><span style="color:#36b884">return</span><span style="color:#d4d4d4"> number;</span></div>
<div class="t" style="left:365.36px;top:487.00px;font-size:12.00px;color:#8c8c90;font-family:'Liberation Mono',monospace;-webkit-text-stroke:0.35px #8c8c90;letter-spacing:-0.51px;">28</div>
<div class="t" style="left:403px;top:487.00px;font-size:12.0px;font-family:&quot;Liberation Mono&quot;,monospace;letter-spacing:-0.510px;white-space:pre;-webkit-text-stroke-width:0.3px"><span style="color:#d4d4d4">    </span><span style="color:#179fff">}</span></div>
<div class="t" style="left:365.36px;top:503.00px;font-size:12.00px;color:#8c8c90;font-family:'Liberation Mono',monospace;-webkit-text-stroke:0.35px #8c8c90;letter-spacing:-0.51px;">29</div>
<div class="t" style="left:403px;top:503.00px;font-size:12.0px;font-family:&quot;Liberation Mono&quot;,monospace;letter-spacing:-0.510px;white-space:pre;-webkit-text-stroke-width:0.3px"><span style="color:#da70d6">}</span></div>
<svg style="left:692px;top:320.25px" width="10" height="10" viewBox="0 0 10 10">
<path d="M0.8 1.2 Q0.8 0.4 1.6 0.4 H5.6 Q6.4 0.4 6.4 1.2 V9.6 H0.8Z" fill="#9a9aa4"/><rect x="1.8" y="1.5" width="3.6" height="2.5" fill="#222336"/>
<path d="M6.4 3 L8.6 4.8 V8.4 Q8.6 9.2 7.9 9.2 Q7.3 9.2 7.3 8.4 V5.8 H6.4" fill="none" stroke="#9a9aa4" stroke-width="0.9"/>
</svg>
<div class="t" style="left:707.00px;top:323.00px;font-size:8.80px;color:#a0a0aa;font-family:'Liberation Mono',monospace;-webkit-text-stroke:0.35px #a0a0aa;">22520 gas</div>
<svg style="left:785.6px;top:454.3px" width="10" height="10" viewBox="0 0 10 10">
<path d="M0.8 1.2 Q0.8 0.4 1.6 0.4 H5.6 Q6.4 0.4 6.4 1.2 V9.6 H0.8Z" fill="#9a9aa4"/><rect x="1.8" y="1.5" width="3.6" height="2.5" fill="#222336"/>
<path d="M6.4 3 L8.6 4.8 V8.4 Q8.6 9.2 7.9 9.2 Q7.3 9.2 7.3 8.4 V5.8 H6.4" fill="none" stroke="#9a9aa4" stroke-width="0.9"/>
</svg>
<div class="t" style="left:800.60px;top:457.00px;font-size:8.80px;color:#a0a0aa;font-family:'Liberation Mono',monospace;-webkit-text-stroke:0.35px #a0a0aa;">2415 gas</div>
<div class="a" style="left:1479.5px;top:34.2px;font-family:'Liberation Mono',monospace;font-size:1.533px;line-height:1.86px;white-space:pre;opacity:0.85;-webkit-text-stroke-width:0.2px"><span style="color:#64984f">// SPDX-License-Identifier: GPL-3.0</span>

<span style="color:#569cd6">pragma</span><span style="color:#d4d4d4"> </span><span style="color:#569cd6">solidity</span><span style="color:#d4d4d4"> </span><span style="color:#f44747">&gt;</span><span style="color:#d4d4d4">=</span><span style="color:#b5cea8">0.8.2</span><span style="color:#d4d4d4"> </span><span style="color:#f44747">&lt;</span><span style="color:#b5cea8">0.9.0</span><span style="color:#d4d4d4">;</span>

<span style="color:#64984f">/**</span>
<span style="color:#64984f"> * @title Storage</span>
<span style="color:#64984f"> * @dev Store &amp; retrieve value in a variable</span>
<span style="color:#64984f"> * @custom:dev-run-script ./scripts/deploy_with_ethers.ts</span>
<span style="color:#64984f"> */</span>
<span style="color:#569cd6">contract</span><span style="color:#d4d4d4"> Storage </span><span style="color:#da70d6">{</span>

<span style="color:#d4d4d4">    </span><span style="color:#569cd6">uint256</span><span style="color:#d4d4d4"> number;</span>

<span style="color:#64984f">    /**</span>
<span style="color:#64984f">     * @dev Store value in variable</span>
<span style="color:#64984f">     * @param num value to store</span>
<span style="color:#64984f">     */</span>
<span style="color:#d4d4d4">    </span><span style="color:#569cd6">function</span><span style="color:#d4d4d4"> store</span><span style="color:#179fff">(</span><span style="color:#569cd6">uint256</span><span style="color:#d4d4d4"> num</span><span style="color:#179fff">)</span><span style="color:#d4d4d4"> </span><span style="color:#36b884">public</span><span style="color:#d4d4d4"> </span><span style="color:#179fff">{</span><span style="color:#a0a0aa">    # 22520 gas</span>
<span style="color:#d4d4d4">        number = num;</span>
<span style="color:#d4d4d4">    </span><span style="color:#179fff">}</span>

<span style="color:#64984f">    /**</span>
<span style="color:#64984f">     * @dev Return value</span>
<span style="color:#64984f">     * @return value of &#x27;number&#x27;</span>
<span style="color:#64984f">     */</span>
<span style="color:#d4d4d4">    </span><span style="color:#569cd6">function</span><span style="color:#d4d4d4"> retrieve</span><span style="color:#179fff">()</span><span style="color:#d4d4d4"> </span><span style="color:#36b884">public</span><span style="color:#d4d4d4"> </span><span style="color:#36b884">view</span><span style="color:#d4d4d4"> </span><span style="color:#36b884">returns</span><span style="color:#d4d4d4"> </span><span style="color:#179fff">(</span><span style="color:#569cd6">uint256</span><span style="color:#179fff">)</span><span style="color:#179fff">{</span><span style="color:#a0a0aa">    # 2415 gas</span>
<span style="color:#d4d4d4">        </span><span style="color:#36b884">return</span><span style="color:#d4d4d4"> number;</span>
<span style="color:#d4d4d4">    </span><span style="color:#179fff">}</span>
<span style="color:#da70d6">}</span></div>
<div class="a" style="left:329px;top:720px;width:1271px;height:32px;background:#2a2c3f;"></div>
<div class="a" style="left:329px;top:720px;width:1271px;height:1px;background:#32344b;"></div>
<svg style="left:336px;top:731.5px" width="10" height="11" viewBox="0 0 10 11"><path d="M1 1 L5 4.6 L9 1 M1 6 L5 9.6 L9 6" fill="none" stroke="#b9bad0" stroke-width="1.5"/></svg>
<div class="t" style="left:1078.60px;top:731.00px;font-size:12.05px;color:#b9bad0;-webkit-text-stroke:0.35px #b9bad0;">0</div>
<div class="a" style="left:1108px;top:729.5px;width:15px;height:15px;background:#2a2c3f;border:1px solid #4a4c62;border-radius:3px"></div>
<div class="t" style="left:1130.50px;top:731.00px;font-size:12.60px;color:#b9bad0;-webkit-text-stroke:0.35px #b9bad0;">Listen on all transactions</div>
<svg style="left:1292.5px;top:731.5px" width="12" height="12" viewBox="0 0 12 12"><circle cx="5" cy="5" r="3.9" fill="none" stroke="#b9bad0" stroke-width="1.5"/><path d="M7.9 7.9 L11.2 11.2" stroke="#b9bad0" stroke-width="1.6" stroke-linecap="round"/></svg>
<div class="a" style="left:1313px;top:721px;width:257px;height:31px;background:#35384c;border:1px solid #3d4056;border-radius:4px"></div>
<div class="t" style="left:1325.90px;top:731.00px;font-size:13.50px;color:#8d8ea3;-webkit-text-stroke:0.35px #8d8ea3;">Filter with transaction hash or address</div>
<svg style="left:1580.5px;top:730.5px" width="13" height="13" viewBox="0 0 13 13"><circle cx="6.5" cy="6.5" r="5.5" fill="none" stroke="#b9bad0" stroke-width="1.5"/><path d="M2.6 2.6 L10.4 10.4" stroke="#b9bad0" stroke-width="1.5"/></svg>
<div class="t" style="left:366px;top:757.00px;font-size:12.0px;font-family:'Liberation Mono',monospace;letter-spacing:-0.530px;color:#c4c5d6;white-space:pre;-webkit-text-stroke-width:0.25px;">Type the library name to see available commands.</div>
<div class="t" style="left:366px;top:772.00px;font-size:10.8px;font-family:'Liberation Mono',monospace;letter-spacing:-0.51px;color:#c4c5d6;white-space:pre;-webkit-text-stroke-width:0.25px">creation of Storage pending...</div>
<svg style="left:365px;top:814px" width="19" height="19" viewBox="0 0 19 19"><circle cx="9.5" cy="9.5" r="9.4" fill="#32ba89"/><path d="M5.6 9.8 L8.3 12.3 L13.3 7.2" fill="none" stroke="#1d2030" stroke-width="1.9"/></svg>
<div class="t" style="left:403.75px;top:818.00px;font-size:12.0px;font-family:'Liberation Mono',monospace;letter-spacing:-0.6px;color:#b9bad0;white-space:pre;-webkit-text-stroke-width:0.2px"><span style="font-weight:bold">[block:5583405 txIndex:4]</span><span style="font-weight:normal"> </span><span style="font-weight:bold;margin-left:4.6px">from:</span><span style="font-weight:normal"> 0xa03...85ac4 </span><span style="font-weight:bold">to:</span><span style="font-weight:normal"> Storage.(constructor) </span><span style="font-weight:bold">value:</span><span style="font-weight:normal"> 0 wei </span><span style="font-weight:bold">data:</span><span style="font-weight:normal"> 0x608...30033 </span><span style="font-weight:bold">logs:</span><span style="font-weight:normal"> 0 </span><span style="font-weight:bold">hash:</span><span style="font-weight:normal"> 0x76d...57ad9</span></div>
<div class="a" style="left:1480px;top:810.3px;width:50px;height:26.3px;background:#037aa6;border-radius:3px"></div>
<div class="t" style="left:1488.70px;top:819.00px;font-size:10.61px;color:#ffffff;font-weight:bold;">Debug</div>
<svg style="left:1540px;top:818px" width="15" height="9" viewBox="0 0 15 9"><path d="M1 1 L7.5 7.6 L14 1" fill="none" stroke="#b9bad0" stroke-width="1.8"/></svg>
<div class="a" style="left:1585.5px;top:826px;width:7px;height:36px;background:#3a3d55;border-radius:3.5px"></div>
<svg style="left:336.5px;top:874px" width="7" height="7" viewBox="0 0 7 7"><path d="M0.8 0.8 L6 3.5 L0.8 6.2" fill="none" stroke="#d8d8e2" stroke-width="1.4"/></svg>
<div class="a" style="left:0px;top:896px;width:1600px;height:24px;background:#0f1018;"></div>
<div class="a" style="left:0px;top:896px;width:1600px;height:24px;background:#34566e;border-radius:0 0 8px 8px"></div>
<div class="a" style="left:0px;top:896px;width:1px;height:17px;background:#4a6a82;"></div>
<div class="a" style="left:1512px;top:896px;width:88px;height:24px;background:#c97539;border-radius:0 0 8px 0"></div>
<div class="t" style="left:18.75px;top:904.00px;font-size:10.28px;color:#e8eef2;-webkit-text-stroke:0.35px #e8eef2;-webkit-text-stroke:0.45px #e8eef2;">Initialize as git repo</div>
<svg style="left:514px;top:901.5px" width="8" height="12" viewBox="0 0 8 12"><path d="M4 0.5 Q7.5 0.5 7.5 4 Q7.5 6 5.6 7.6 V9 H2.4 V7.6 Q0.5 6 0.5 4 Q0.5 0.5 4 0.5Z" fill="#32ba89"/><rect x="2.6" y="9.6" width="2.8" height="1.6" rx="0.6" fill="#32ba89"/></svg>
<div class="t" style="left:529.00px;top:903.00px;font-size:10.58px;color:#ffffff;-webkit-text-stroke:0.35px #ffffff;-webkit-text-stroke:0.75px #fff;">Did you know?</div>
<div class="t" style="left:607.20px;top:904.00px;font-size:10.29px;color:#f0f3f6;-webkit-text-stroke:0.35px #f0f3f6;-webkit-text-stroke:0.4px #f0f3f6;">To prototype using the Gnosis safe multi sig wallet: create a multisig workspace.</div>
<div class="t" style="left:1382.80px;top:904.00px;font-size:10.06px;color:#e8eef2;-webkit-text-stroke:0.35px #e8eef2;-webkit-text-stroke:0.45px #e8eef2;">RemixAI Copilot (enabled)</div>
<svg style="left:1519.5px;top:901px" width="13" height="12" viewBox="0 0 13 12"><path d="M6.5 1 L12.2 11 H0.8Z" fill="none" stroke="#ffffff" stroke-width="1.3" stroke-linejoin="round"/><path d="M6.5 4.3 V7.6" stroke="#fff" stroke-width="1.3"/><circle cx="6.5" cy="9.2" r="0.7" fill="#fff"/></svg>
<div class="t" style="left:1539.20px;top:904.00px;font-size:10.24px;color:#ffffff;-webkit-text-stroke:0.35px #ffffff;-webkit-text-stroke:0.4px #fff;">Scam Alert</div>
</div></body></html>
